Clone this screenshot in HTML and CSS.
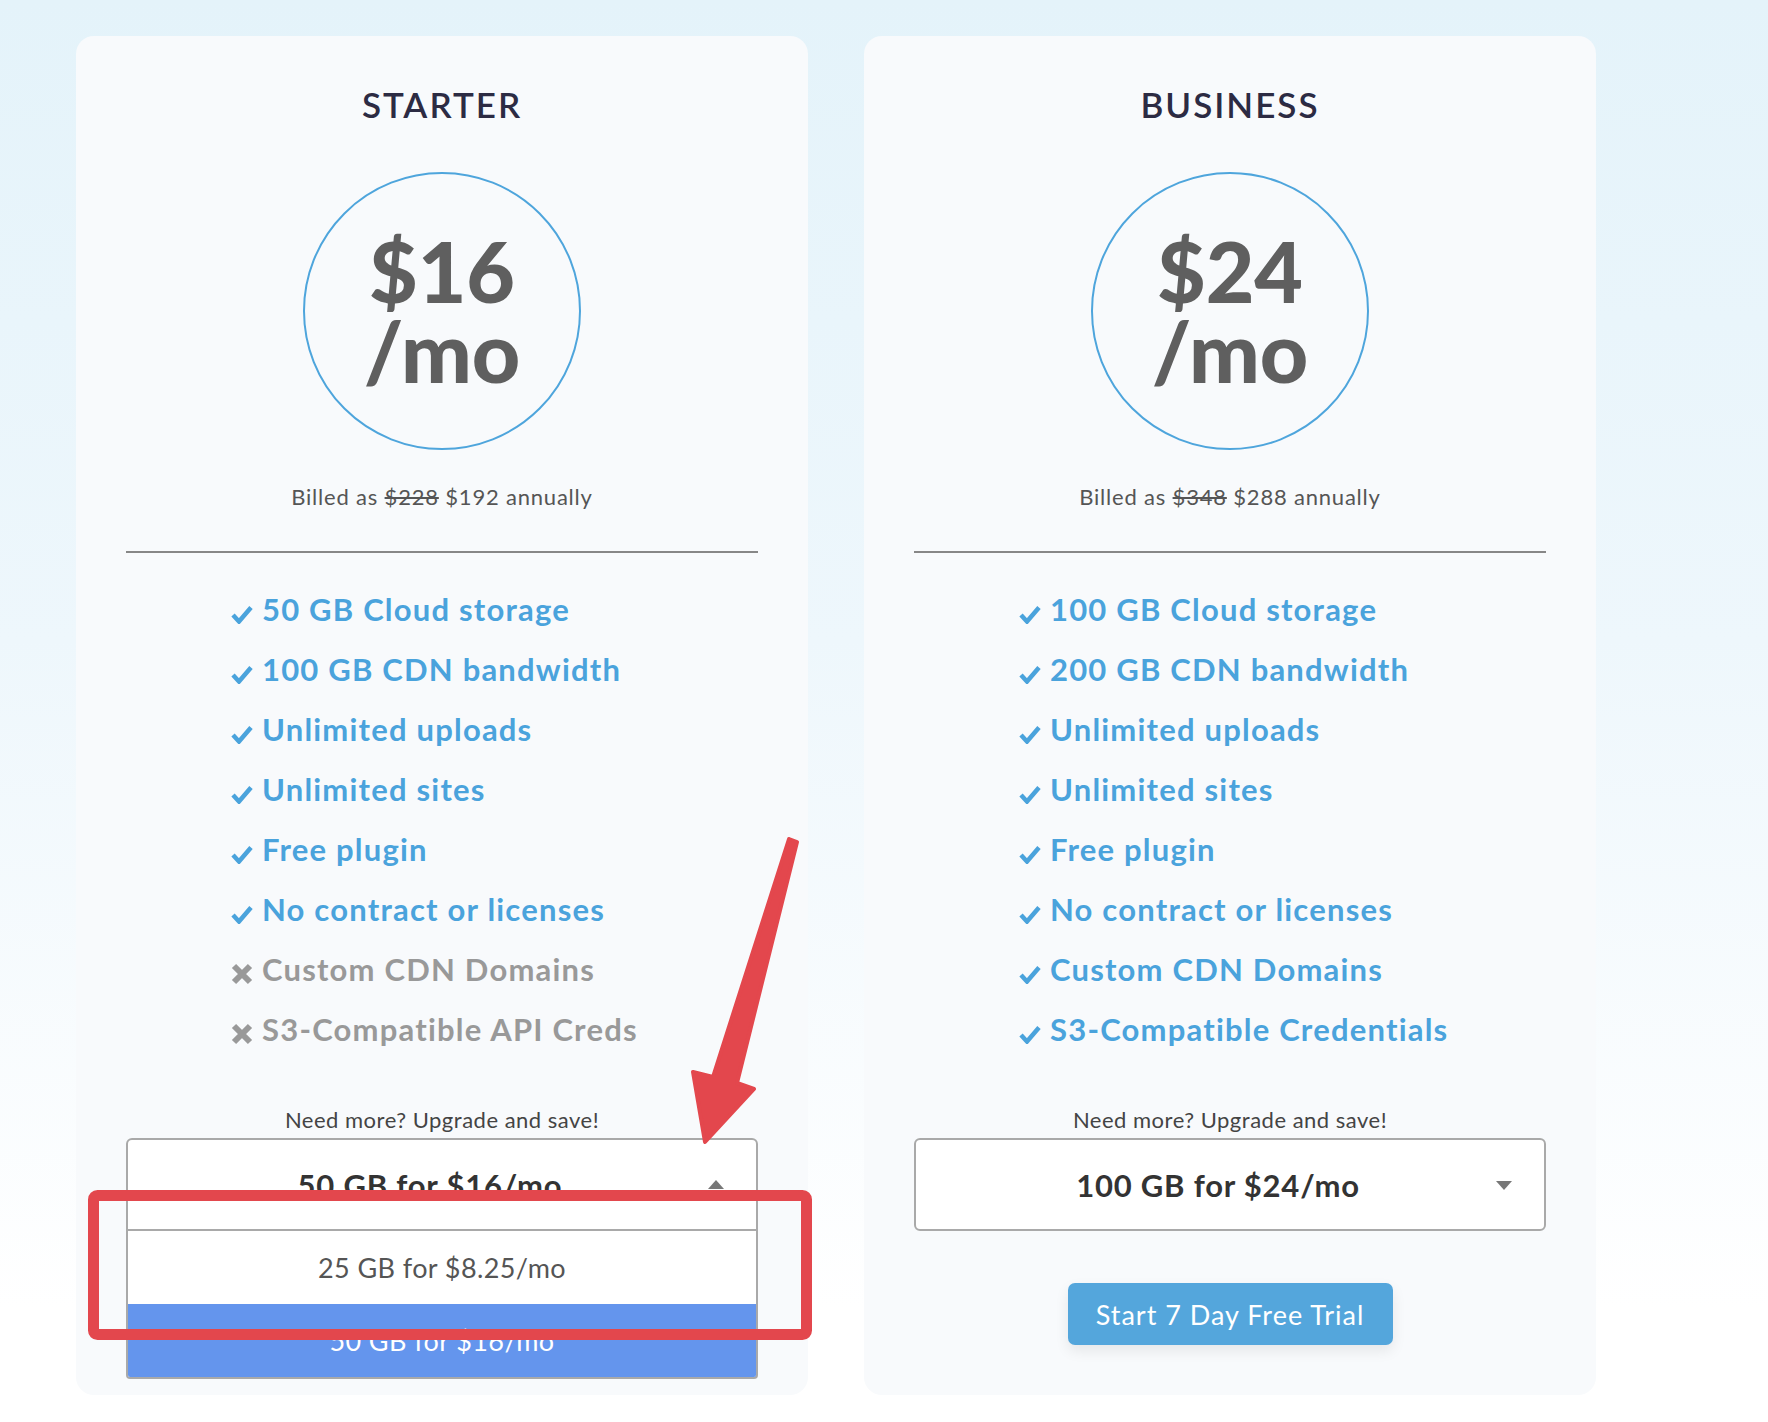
FILE: index.html
```html
<!DOCTYPE html>
<html>
  <head>
    <title>Pricing</title>
    <link rel="stylesheet" href="styles.css">
  </head>
  <body>
    <div class="plans">
      <!-- Starter plan -->
      <div class="plan">
        <h2>STARTER</h2>
        <div class="price"><span>$16</span><span>/mo</span></div>
        <p class="billed">Billed as <s>$228</s> $192 annually</p>
        <hr />
        <ul class="features">
          <li><svg class="icon" viewBox="0 0 22 19"><polyline points="2,10 8,16.5 20,2.5" /></svg>50 GB Cloud storage</li>
          <li><svg class="icon" viewBox="0 0 22 19"><polyline points="2,10 8,16.5 20,2.5" /></svg>100 GB CDN bandwidth</li>
          <li><svg class="icon" viewBox="0 0 22 19"><polyline points="2,10 8,16.5 20,2.5" /></svg>Unlimited uploads</li>
          <li><svg class="icon" viewBox="0 0 22 19"><polyline points="2,10 8,16.5 20,2.5" /></svg>Unlimited sites</li>
          <li><svg class="icon" viewBox="0 0 22 19"><polyline points="2,10 8,16.5 20,2.5" /></svg>Free plugin</li>
          <li><svg class="icon" viewBox="0 0 22 19"><polyline points="2,10 8,16.5 20,2.5" /></svg>No contract or licenses</li>
          <li class="off"><svg class="icon x" viewBox="0 0 22 22"><path d="M3 3 L19 19 M19 3 L3 19" /></svg>Custom CDN Domains</li>
          <li class="off"><svg class="icon x" viewBox="0 0 22 22"><path d="M3 3 L19 19 M19 3 L3 19" /></svg>S3-Compatible API Creds</li>
        </ul>
        <p class="upgrade">Need more? Upgrade and save!</p>
        <div class="select open">
          <span>50 GB for $16/mo</span>
          <span class="caret"></span>
          <ul class="options">
            <li>25 GB for $8.25/mo</li>
            <li class="selected">50 GB for $16/mo</li>
          </ul>
        </div>
        <!-- covered by the open dropdown -->
        <button class="trial covered">Start 7 Day Free Trial</button>
      </div>

      <!-- Business plan -->
      <div class="plan">
        <h2>BUSINESS</h2>
        <div class="price"><span>$24</span><span>/mo</span></div>
        <p class="billed">Billed as <s>$348</s> $288 annually</p>
        <hr />
        <ul class="features">
          <li><svg class="icon" viewBox="0 0 22 19"><polyline points="2,10 8,16.5 20,2.5" /></svg>100 GB Cloud storage</li>
          <li><svg class="icon" viewBox="0 0 22 19"><polyline points="2,10 8,16.5 20,2.5" /></svg>200 GB CDN bandwidth</li>
          <li><svg class="icon" viewBox="0 0 22 19"><polyline points="2,10 8,16.5 20,2.5" /></svg>Unlimited uploads</li>
          <li><svg class="icon" viewBox="0 0 22 19"><polyline points="2,10 8,16.5 20,2.5" /></svg>Unlimited sites</li>
          <li><svg class="icon" viewBox="0 0 22 19"><polyline points="2,10 8,16.5 20,2.5" /></svg>Free plugin</li>
          <li><svg class="icon" viewBox="0 0 22 19"><polyline points="2,10 8,16.5 20,2.5" /></svg>No contract or licenses</li>
          <li><svg class="icon" viewBox="0 0 22 19"><polyline points="2,10 8,16.5 20,2.5" /></svg>Custom CDN Domains</li>
          <li><svg class="icon" viewBox="0 0 22 19"><polyline points="2,10 8,16.5 20,2.5" /></svg>S3-Compatible Credentials</li>
        </ul>
        <p class="upgrade">Need more? Upgrade and save!</p>
        <div class="select">
          <span>100 GB for $24/mo</span>
          <span class="caret"></span>
        </div>
        <button class="trial">Start 7 Day Free Trial</button>
      </div>
    </div>

    <!-- Screenshot annotation -->
    <svg class="annotation" viewBox="0 0 1768 1422">
      <polygon class="arrow" points="789,839 797,842 737,1083 754,1089 705,1142 693,1072 713,1077" />
      <rect class="highlight" x="93.5" y="1195.5" width="713" height="139" rx="4" />
    </svg>
  </body>
</html>
```

FILE: styles.css
```css
html {
  height: 100%;
}

body {
  position: relative;
  margin: 0;
  min-height: 100%;
  font-family: Lato, "Open Sans", sans-serif;
  color: #555;
  background: linear-gradient(180deg, #e4f3fa 0%, #eef7fc 45%, #ffffff 92%);
}

.plans {
  display: flex;
  gap: 56px;
  padding: 36px 0 0 76px;
}

.plan {
  width: 732px;
  box-sizing: border-box;
  padding: 47px 50px 50px;
  background: #f8fafc;
  border-radius: 18px;
  text-align: center;
}

.plan h2 {
  margin: 0;
  font-size: 35px;
  line-height: 42px;
  font-weight: 600;
  color: #2c2b43;
  letter-spacing: 2px;
}

.price {
  display: flex;
  flex-direction: column;
  justify-content: center;
  width: 278px;
  height: 278px;
  box-sizing: border-box;
  margin: 47px auto 0;
  border: 2px solid #4ea5dc;
  border-radius: 50%;
  font-size: 84px;
  line-height: 80px;
  font-weight: 900;
  color: #5f5f5f;
}

.billed {
  margin: 33px 0 0;
  font-size: 22px;
  line-height: 28px;
  letter-spacing: 0.8px;
}

.plan hr {
  margin: 40px 0 0;
  border: 0;
  border-top: 2px solid #878787;
}

.features {
  list-style: none;
  margin: 26px 0 0;
  padding: 0 0 0 105px;
  text-align: left;
}

.features li {
  height: 60px;
  line-height: 60px;
  font-size: 31px;
  font-weight: 700;
  letter-spacing: 1.2px;
  color: #4aa3dc;
}

.features li.off {
  color: #999;
}

.icon {
  width: 22px;
  height: 19px;
  margin-right: 9px;
  vertical-align: -3px;
  fill: none;
  stroke: currentColor;
  stroke-width: 4.5;
}

.icon.x {
  height: 22px;
  stroke-width: 6;
  vertical-align: -4px;
}

.upgrade {
  margin: 47px 0 0;
  font-size: 22px;
  line-height: 28px;
  letter-spacing: 0.5px;
  color: #444;
}

.select {
  position: relative;
  display: flex;
  align-items: center;
  justify-content: center;
  height: 93px;
  box-sizing: border-box;
  margin-top: 4px;
  padding-right: 24px;
  border: 2px solid #a9a9a9;
  border-radius: 6px;
  background: #fff;
  font-size: 31px;
  font-weight: 700;
  letter-spacing: 0.8px;
  color: #333;
}

.caret {
  position: absolute;
  right: 32px;
  top: 50%;
  margin-top: -4px;
  border-left: 8px solid transparent;
  border-right: 8px solid transparent;
  border-top: 9px solid #777;
}

.select.open {
  border-radius: 6px 6px 0 0;
}

.select.open .caret {
  margin-top: -5px;
  border-top: 0;
  border-bottom: 9px solid #777;
}

.options {
  position: absolute;
  z-index: 2;
  top: calc(100% + 2px);
  left: -2px;
  right: -2px;
  margin: 0;
  padding: 0;
  list-style: none;
  background: #fff;
  border: 2px solid #a9a9a9;
  border-top: 0;
  border-radius: 0 0 4px 4px;
  overflow: hidden;
}

.options li {
  height: 73px;
  line-height: 73px;
  font-size: 27px;
  font-weight: 400;
  letter-spacing: 0.4px;
  color: #555;
}

.options li.selected {
  background: #6495ed;
  color: #fff;
}

.trial {
  display: block;
  width: 325px;
  height: 62px;
  margin: 52px auto 0;
  border: none;
  border-radius: 7px;
  background: #54a6dc;
  box-shadow: 0 6px 14px rgba(0, 0, 0, 0.08);
  color: #fff;
  font-family: inherit;
  font-size: 27px;
  letter-spacing: 1px;
  cursor: pointer;
}

.trial.covered {
  visibility: hidden;
}

.annotation {
  position: absolute;
  z-index: 5;
  top: 0;
  left: 0;
  width: 1768px;
  height: 1422px;
  pointer-events: none;
}

.arrow {
  fill: #e3474d;
  stroke: #e3474d;
  stroke-width: 4;
  stroke-linejoin: round;
}

.highlight {
  fill: none;
  stroke: #e3474d;
  stroke-width: 11;
}
```
